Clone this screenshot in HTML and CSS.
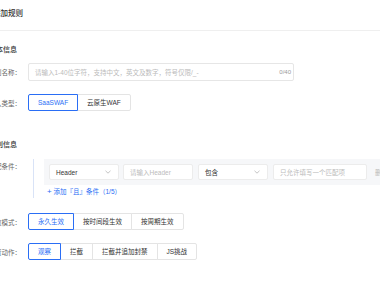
FILE: index.html
```html
<!DOCTYPE html>
<html lang="zh-CN">
<head>
    <meta charset="UTF-8">
    <meta name="viewport" content="width=device-width, initial-scale=1.0">
    <title>添加规则</title>
    <link rel="stylesheet" href="styles.css">
</head>
<body>

<div class="page">
    <div class="page-title">添加规则</div>

    <div class="section-title first">基本信息</div>

    <div class="form-row row-name">
        <label class="form-label">规则名称：</label>
        <div class="text-input wide">
            <span class="placeholder">请输入1-40位字符，支持中文，英文及数字，符号仅限/_-</span>
            <span class="counter">0/40</span>
        </div>
    </div>

    <div class="form-row row-access">
        <label class="form-label">接入类型：</label>
        <div class="btn-group">
            <span class="btn active">SaaSWAF</span>
            <span class="btn">云原生WAF</span>
        </div>
    </div>

    <div class="section-title second">规则信息</div>

    <div class="form-row row-cond">
        <label class="form-label top">匹配条件：</label>
        <div class="cond-wrap">
            <div class="cond-box">
                <div class="select s-field">
                    <span class="value">Header</span>
                    <svg class="chevron" width="6" height="4" viewBox="0 0 6 4"><path d="M0.5 0.8 L3 3.2 L5.5 0.8" fill="none" stroke="#aaa" stroke-width="0.7"/></svg>
                </div>
                <div class="select s-key">
                    <span class="placeholder">请输入Header</span>
                </div>
                <div class="select s-op">
                    <span class="value">包含</span>
                    <svg class="chevron" width="6" height="4" viewBox="0 0 6 4"><path d="M0.5 0.8 L3 3.2 L5.5 0.8" fill="none" stroke="#aaa" stroke-width="0.7"/></svg>
                </div>
                <div class="select s-val">
                    <span class="placeholder">只允许填写一个匹配项</span>
                </div>
                <span class="cond-del">删除</span>
            </div>
            <div class="add-link"><span class="plus">+</span> 添加『且』条件（1/5）</div>
        </div>
    </div>

    <div class="form-row row-mode">
        <label class="form-label">生效模式：</label>
        <div class="btn-group">
            <span class="btn active">永久生效</span>
            <span class="btn">按时间段生效</span>
            <span class="btn">按周期生效</span>
        </div>
    </div>

    <div class="form-row row-action">
        <label class="form-label">处置动作：</label>
        <div class="btn-group">
            <span class="btn active">观察</span>
            <span class="btn">拦截</span>
            <span class="btn">拦截并追加封禁</span>
            <span class="btn">JS挑战</span>
        </div>
    </div>
</div>

</body>
</html>
```

FILE: styles.css
```css
body {
    margin: 0;
    padding: 0;
    background-color: #fff;
    font-family: "Liberation Sans", "Noto Sans CJK SC", sans-serif;
    color: #333;
    overflow: hidden;
    width: 380px;
    height: 282px;
}

.page {
    margin-left: -40px;
    width: 460px;
}

/* header */
.page-title {
    height: 30px;
    line-height: 28px;
    padding-left: 33px;
    font-size: 7.5px;
    font-weight: 500;
    color: #333;
    border-bottom: 1px solid #efefef;
}

.section-title {
    height: 14px;
    line-height: 14px;
    padding-left: 29px;
    font-size: 7px;
    font-weight: 500;
    color: #333;
}

.section-title.first {
    margin-top: 12px;
}

.section-title.second {
    margin-top: 27px;
}

/* form rows */
.form-row {
    display: flex;
    align-items: center;
}

.row-name {
    margin-top: 6px;
}

.row-access {
    margin-top: 13px;
}

.row-cond {
    margin-top: 7px;
    align-items: flex-start;
}

.row-mode {
    margin-top: 15px;
}

.row-action {
    margin-top: 13px;
}

.form-label {
    width: 61px;
    margin-right: 7px;
    text-align: right;
    font-size: 6.5px;
    color: #666;
    flex-shrink: 0;
}

.form-label.top {
    line-height: 16px;
}

/* text input */
.text-input {
    box-sizing: border-box;
    height: 18px;
    border: 1px solid #e6e6e6;
    border-radius: 2px;
    display: flex;
    align-items: center;
    justify-content: space-between;
    padding: 0 2px 0 6px;
    font-size: 6.5px;
}

.text-input.wide {
    width: 266px;
}

.placeholder {
    color: #bbb;
    white-space: nowrap;
}

.counter {
    color: #999;
    font-size: 6px;
}

/* button group */
.btn-group {
    display: flex;
}

.btn {
    box-sizing: border-box;
    height: 17px;
    line-height: 15px;
    padding: 0 9px;
    border: 1px solid #e4e4e4;
    font-size: 6.5px;
    color: #333;
    background-color: #fff;
    white-space: nowrap;
    margin-left: -1px;
    position: relative;
}

.btn:first-child {
    margin-left: 0;
    border-radius: 2px 0 0 2px;
}

.btn:last-child {
    border-radius: 0 2px 2px 0;
}

.btn.active {
    color: #2a6ef5;
    border-color: #2a6ef5;
    z-index: 1;
}

/* match conditions */
.cond-wrap {
    margin-left: 5px;
    padding-left: 10px;
    border-left: 1px solid #d9e3f7;
    flex: 1;
}

.cond-box {
    box-sizing: border-box;
    height: 26px;
    background-color: #f6f7f9;
    padding: 5px;
    display: flex;
    align-items: center;
}

.select {
    box-sizing: border-box;
    height: 16px;
    background-color: #fff;
    border: 1px solid #ececec;
    border-radius: 2px;
    padding: 0 6px;
    display: flex;
    align-items: center;
    justify-content: space-between;
    font-size: 6.5px;
    flex-shrink: 0;
}

.select .value {
    color: #333;
}

.s-field {
    width: 70px;
}

.s-key {
    width: 70px;
    margin-left: 4px;
}

.s-op {
    width: 70px;
    margin-left: 5px;
}

.s-val {
    width: 94px;
    margin-left: 5px;
}

.chevron {
    display: block;
    margin-right: 1px;
}

.cond-del {
    margin-left: 8px;
    font-size: 6.5px;
    color: #bbb;
    white-space: nowrap;
}

.add-link {
    height: 13px;
    line-height: 14px;
    padding-left: 3px;
    font-size: 6.5px;
    color: #2a6ef5;
}

.plus {
    font-size: 8px;
}
```
